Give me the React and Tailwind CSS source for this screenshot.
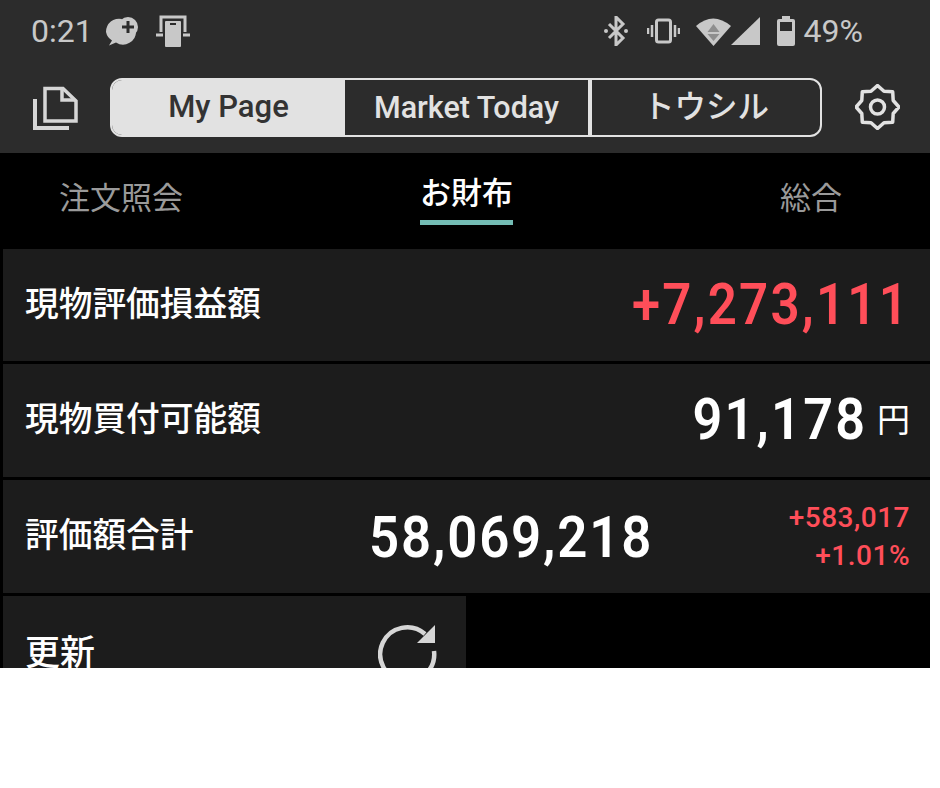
import React from "react";

function Row({ children, className = "" }) {
  return <div className={`flex items-center bg-[#1c1c1c] pl-[22px] pr-[20px] ${className}`}>{children}</div>;
}

const gearPoints = Array.from({ length: 16 }, (_, i) => {
  const a = (i * Math.PI) / 8 - Math.PI / 2;
  const r = i % 2 === 0 ? 21.5 : 17;
  return `${(22.5 + r * Math.cos(a)).toFixed(2)},${(23 + r * Math.sin(a)).toFixed(2)}`;
}).join(" ");

export default function App() {
  return (
    <div className="h-[788px] w-[940px] bg-white font-['Roboto','Noto_Sans_CJK_JP',sans-serif]">
      <div className="h-[668px] w-[930px] overflow-hidden bg-black">
        <div className="h-[153px] bg-[#2c2c2c]">
          <div className="flex h-[62px] items-center pl-[31px] pr-[67px] text-[#c8c8c8]">
            <span className="text-[32px] leading-none">0:21</span>
            <svg className="ml-[12px]" width="35" height="30" viewBox="0 0 35 30">
              <path d="M1 16a13 13 0 0 1 16-13a10 10 0 0 0 14 12a13 13 0 0 1-20 11.500l-7 3l3-5a13 13 0 0 1-6-8.500z" fill="#c8c8c8" />
              <circle cx="23" cy="11" r="10" fill="#c8c8c8" />
              <path d="M23 5v12M17 11h12" stroke="#2c2c2c" strokeWidth="3" />
            </svg>
            <svg className="ml-[16px]" width="34" height="32" viewBox="0 0 34 32">
              <path d="M5 17V2h24v15" fill="none" stroke="#c8c8c8" strokeWidth="3" />
              <rect x="9" y="6" width="16" height="26" rx="1" fill="#c8c8c8" />
              <path d="M0 20h7M27 20h7" stroke="#c8c8c8" strokeWidth="3" />
              <path d="M14 9h6" stroke="#2c2c2c" strokeWidth="2" />
            </svg>
            <div className="ml-auto flex items-center">
              <svg width="26" height="30" viewBox="0 0 26 30" fill="none">
                <path d="M6 8l14 14l-7 7V1l7 7L6 22" stroke="#c8c8c8" strokeWidth="3" />
                <circle cx="3" cy="15" r="2" fill="#c8c8c8" />
                <circle cx="23" cy="15" r="2" fill="#c8c8c8" />
              </svg>
              <svg className="ml-[18px]" width="33" height="26" viewBox="0 0 33 26" fill="none">
                <rect x="9.500" y="2" width="14" height="22" rx="2" stroke="#c8c8c8" strokeWidth="3" />
                <path d="M5 7v12M1 10v6M28 7v12M32 10v6" stroke="#c8c8c8" strokeWidth="2.500" />
              </svg>
              <svg className="ml-[16px]" width="35" height="29" viewBox="0 0 35 29">
                <path d="M0 9Q17-6 35 9L17.500 29z" fill="#c8c8c8" />
                <path d="M17.500 7l6 8h-12zM11.500 17h12l-6 7z" fill="#8e8e8e" />
              </svg>
              <svg width="29" height="29" viewBox="0 0 29 29">
                <path d="M29 0v28H0z" fill="#c8c8c8" />
              </svg>
              <svg className="ml-[17px]" width="18" height="30" viewBox="0 0 18 30">
                <path d="M5 0h8v3h3a2 2 0 0 1 2 2v23a2 2 0 0 1-2 2H2a2 2 0 0 1-2-2V5a2 2 0 0 1 2-2h3z" fill="#c8c8c8" />
                <rect x="3" y="6" width="12" height="9" fill="#2c2c2c" />
              </svg>
              <span className="ml-[9px] text-[32px] leading-none">49%</span>
            </div>
          </div>
          <div className="flex h-[91px] items-start pl-[33px] pr-[30px] pt-[16px]">
            <svg className="mt-[8px]" width="45" height="44" viewBox="0 0 45 44" fill="none" stroke="#d6d6d6" strokeWidth="3.500">
              <path d="M12 2.500h18L43 15v20H12z" />
              <path d="M29 3v11h13" />
              <path d="M2 13v29h34" strokeWidth="4" />
            </svg>
            <div className="ml-[32px] flex h-[59px] w-[712px] overflow-hidden rounded-[12px] border-2 border-[#e2e2e2] text-center">
              <div className="flex w-[233px] items-center justify-center bg-[#e2e2e2] text-[31px] font-medium text-[#333333]">My Page</div>
              <div className="flex w-[243px] items-center justify-center text-[30.500px] font-medium text-[#e2e2e2]">Market Today</div>
              <div className="flex flex-1 items-center justify-center border-l-[4px] border-[#e2e2e2] text-[31.500px] font-medium text-[#e2e2e2]">トウシル</div>
            </div>
            <svg className="ml-[33px] mt-[6px]" width="45" height="46" viewBox="0 0 45 46" fill="none" stroke="#e2e2e2" strokeWidth="3.500" strokeLinejoin="round">
              <polygon points={gearPoints} />
              <circle cx="22.500" cy="23" r="7" />
            </svg>
          </div>
        </div>

        <div className="flex h-[95px] items-start justify-between pl-[59px] pr-[88px]">
          <span className="mt-[27px] text-[31px] leading-[38px] text-[#9a9a9a]">注文照会</span>
          <div className="mr-[30px] mt-[22px] flex flex-col">
            <span className="text-[31px] font-medium leading-[38px] text-white">お財布</span>
            <span className="mt-[7px] h-[5px] bg-[#74bdb5]" />
          </div>
          <span className="mt-[27px] text-[31px] leading-[38px] text-[#9a9a9a]">総合</span>
        </div>

        <div className="ml-[3px] mt-[1px] flex flex-col gap-[3px]">
          <Row className="h-[112px]">
            <span className="text-[33.700px] font-medium text-white">現物評価損益額</span>
            <span className="ml-auto mb-[3px] origin-right scale-x-[0.88] text-[58px] font-semibold leading-none tracking-[2.5px] text-[#ff4e59]">+7,273,111</span>
          </Row>
          <Row className="h-[113px]">
            <span className="text-[33.700px] font-medium text-white">現物買付可能額</span>
            <span className="ml-auto mb-[3px] origin-right scale-x-[0.9] text-[58px] font-semibold leading-none tracking-[2.5px] text-white">91,178</span>
            <span className="ml-[10px] text-[33px] text-white">円</span>
          </Row>
          <Row className="h-[113px]">
            <span className="w-[344px] text-[33.700px] font-medium text-white">評価額合計</span>
            <span className="origin-left scale-x-[0.91] text-[58px] font-semibold leading-none tracking-[2px] text-white">58,069,218</span>
            <div className="ml-auto flex flex-col items-end text-[28px] font-medium leading-[38px] tracking-[0.5px] text-[#ff4e59]">
              <span>+583,017</span>
              <span>+1.01%</span>
            </div>
          </Row>
          <div className="flex h-[80px] w-[463px] items-start bg-[#1c1c1c] pl-[22px] pr-[28px] pt-[33px]">
            <span className="text-[35px] font-medium leading-[50px] text-white">更新</span>
            <svg className="ml-auto mt-[-7px]" width="60" height="60" viewBox="0 0 60 60" fill="none">
              <path d="M47 12A27 27 0 1 0 56 29" stroke="#d6d6d6" strokeWidth="4.500" />
              <path d="M57 3v18H39z" fill="#d6d6d6" />
            </svg>
          </div>
        </div>
      </div>
    </div>
  );
}
